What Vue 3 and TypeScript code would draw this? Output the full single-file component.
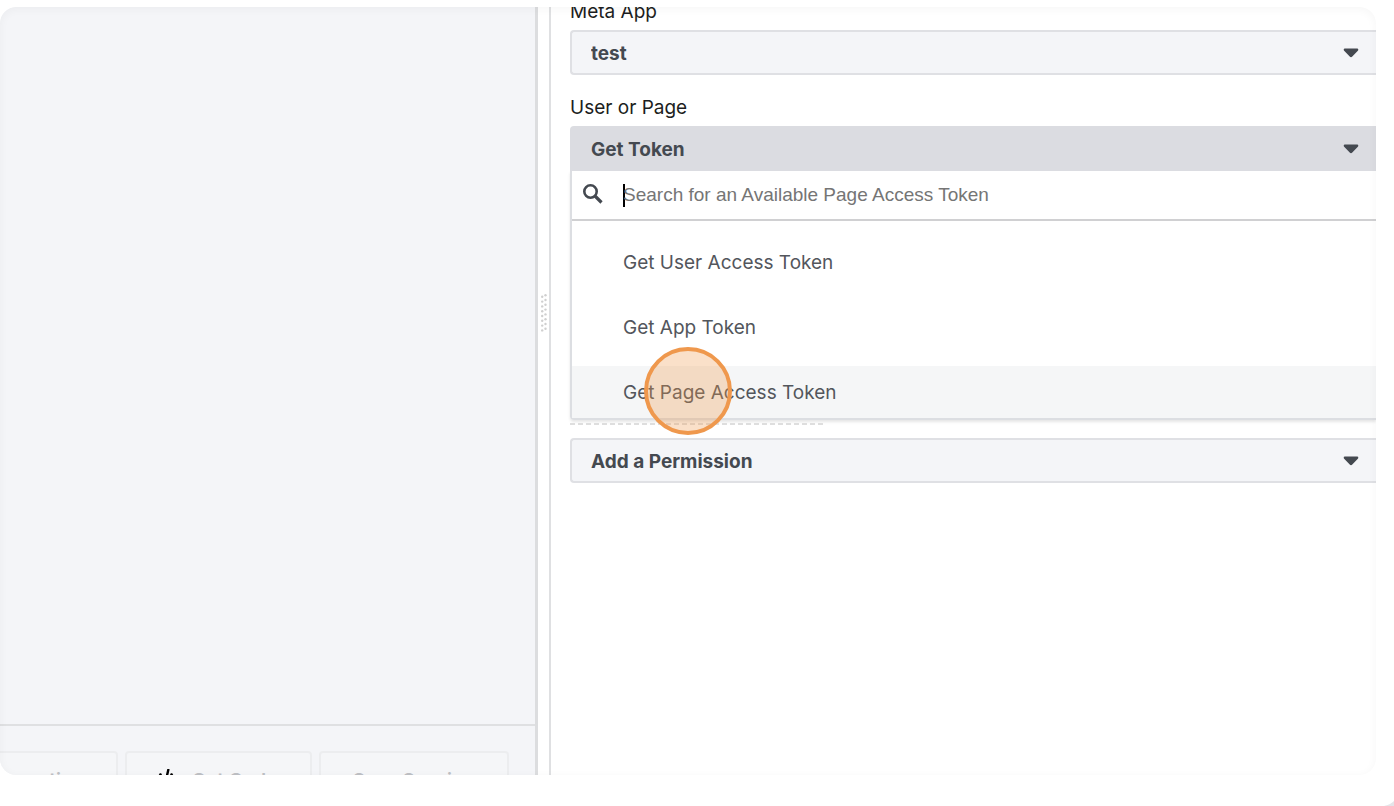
<script setup lang="ts">
import { ref } from 'vue'

const query = ref('')
const tokenOptions: string[] = ['Get User Access Token', 'Get App Token', 'Get Page Access Token']
const activeIndex = 2
const gripRows = 8
</script>

<template>
  <div class="page">
    <main class="frame">
      <section class="response">
        <div class="response-body"></div>
        <footer class="actions">
          <button type="button" class="action copy" disabled>Copy Debug Information</button>
          <button type="button" class="action code" disabled>
            <svg class="code-icon" viewBox="0 0 20 24" aria-hidden="true">
              <path d="M5 4.500 1 11.500 5 18.500M15 4.500l4 7-4 7M12.500 0 7 24" fill="none" stroke="#000" stroke-width="2.400" />
            </svg>
            Get Code
          </button>
          <button type="button" class="action save" disabled>Save Session</button>
        </footer>
      </section>

      <div class="splitter" role="separator" aria-orientation="vertical">
        <svg class="grip" viewBox="0 0 8 40" aria-hidden="true">
          <template v-for="n in gripRows" :key="n">
            <circle cx="5.500" :cy="n * 4.8 - 2.6" r="1.200" />
            <circle cx="2.200" :cy="n * 4.8 - 1" r="1.200" />
          </template>
        </svg>
      </div>

      <section class="settings">
        <label class="label" for="meta-app">Meta App</label>
        <div class="picker">
          <select id="meta-app"><option>test</option></select>
          <svg class="caret" viewBox="0 0 16 10" aria-hidden="true"><path d="M2 .5h12q1.500 0 1.300 1.300-.1.700-.7 1.300L9.300 8.500Q8 9.800 6.700 8.500L1.400 3.100Q.8 2.500.7 1.800.5.5 2 .5Z" /></svg>
        </div>

        <label class="label spaced" for="user-page">User or Page</label>
        <div class="picker open">
          <select id="user-page"><option>Get Token</option></select>
          <svg class="caret" viewBox="0 0 16 10" aria-hidden="true"><path d="M2 .5h12q1.500 0 1.300 1.300-.1.700-.7 1.300L9.300 8.500Q8 9.800 6.700 8.500L1.400 3.100Q.8 2.500.7 1.800.5.5 2 .5Z" /></svg>
        </div>
        <div class="menu">
          <div class="search">
            <svg class="search-icon" viewBox="0 0 20 20" aria-hidden="true">
              <circle cx="7.500" cy="7.500" r="6.200" fill="none" stroke="#444950" stroke-width="2.600" />
              <path d="m12 12 6.500 6.500" stroke="#444950" stroke-width="3.200" />
            </svg>
            <span class="text-cursor"></span>
            <input v-model="query" type="text" aria-label="Search tokens" placeholder="Search for an Available Page Access Token">
          </div>
          <ul class="options">
            <li v-for="(option, i) in tokenOptions" :key="option">
              <button type="button" class="option" :class="{ active: i === activeIndex }">{{ option }}</button>
              <span v-if="i === activeIndex" class="click-marker"></span>
            </li>
          </ul>
        </div>

        <div class="dashes"></div>
        <div class="picker">
          <select id="permission" aria-label="Add a Permission"><option>Add a Permission</option></select>
          <svg class="caret" viewBox="0 0 16 10" aria-hidden="true"><path d="M2 .5h12q1.500 0 1.300 1.300-.1.700-.7 1.300L9.300 8.500Q8 9.800 6.700 8.500L1.400 3.100Q.8 2.500.7 1.800.5.5 2 .5Z" /></svg>
        </div>
      </section>
    </main>
    <svg class="corner" viewBox="0 0 10 5" aria-hidden="true">
      <path d="M0 5Q6 4 10 0V5Z" fill="#e4e5e9" />
    </svg>
  </div>
</template>

<style>
body {
  margin: 0;
  background: #fff;
}
</style>

<style scoped>
* {
  box-sizing: border-box;
}

.page {
  position: relative;
  height: 100vh;
  padding: 7px 18px 31px 0;
  overflow: hidden;
  font-family: Inter, "Liberation Sans", sans-serif;
  font-size: 19px;
  line-height: 24px;
  color: #1c1e21;
}

.frame {
  position: relative;
  display: flex;
  height: 100%;
  overflow: hidden;
  border-radius: 16px;
  background: #fff;
}

.frame::after {
  content: "";
  position: absolute;
  inset: 0;
  border-radius: 16px;
  box-shadow: inset 0 2px 10px rgba(0, 0, 0, 0.04);
  pointer-events: none;
}

.response {
  display: flex;
  flex-direction: column;
  flex: 0 0 39.1%;
  min-width: 0;
  overflow: hidden;
  border-right: 3px solid #dcdddf;
  background: #f4f5f8;
}

.response-body {
  flex: 1;
}

.actions {
  display: flex;
  justify-content: flex-end;
  gap: 7px;
  height: 51px;
  padding: 25px 26px 0 0;
  border-top: 2px solid #dfe0e2;
}

.action {
  display: flex;
  flex: none;
  align-items: center;
  justify-content: center;
  gap: 16px;
  height: 60px;
  padding: 0 30px;
  border: 2px solid #ecedef;
  border-radius: 4px;
  background: #f5f6f8;
  color: #bec0c4;
  font: inherit;
  font-weight: 600;
}

.copy {
  width: 292px;
}

.code {
  width: 187px;
  padding: 0 32px 0 28px;
}

.save {
  width: 190px;
}

.code-icon {
  flex: none;
  width: 20px;
  height: 24px;
}

.splitter {
  display: flex;
  flex: 0 0 13px;
  justify-content: center;
  padding-top: 286px;
  border-right: 2px solid #dfe0e2;
}

.grip {
  width: 8px;
  height: 40px;
  fill: #cfcfcf;
}

.settings {
  flex: 1;
  min-width: 0;
  padding-left: 19px;
}

.label {
  display: block;
  height: 23px;
  line-height: 10px;
}

.label.spaced {
  height: 51px;
  padding-top: 20px;
  line-height: 26px;
}

.picker {
  position: relative;
  height: 45px;
}

.picker select {
  width: 100%;
  height: 100%;
  padding: 2px 40px 0 19px;
  appearance: none;
  border: 2px solid #dfe0e4;
  border-right: 0;
  border-radius: 4px 0 0 4px;
  background: #f4f5f8;
  color: #444950;
  font: inherit;
  font-weight: 700;
}

.picker.open select {
  border-color: #dbdce1;
  border-bottom-left-radius: 0;
  background: #dbdce1;
}

.caret {
  position: absolute;
  top: 18px;
  right: 17px;
  width: 16px;
  height: 10px;
  fill: #444950;
  pointer-events: none;
}

.menu {
  border: solid #dcdee2;
  border-width: 0 0 2px 2px;
  border-radius: 0 0 0 4px;
  box-shadow: 0 2px 3px rgba(0, 0, 0, 0.1);
}

.search {
  display: flex;
  align-items: center;
  height: 50px;
  padding-left: 11px;
  border-bottom: 2px solid #d0d0d2;
}

.search-icon {
  flex: none;
  width: 20px;
  height: 20px;
  margin: 0 20px 3px 0;
}

.text-cursor {
  flex: none;
  width: 2px;
  height: 23px;
  margin-right: -2px;
  background: #000;
}

.search input {
  flex: 1;
  min-width: 0;
  padding: 0;
  border: 0;
  outline: 0;
  background: none;
  font: 19px "Liberation Sans", sans-serif;
}

.search input::placeholder {
  color: #757575;
  opacity: 1;
}

.options {
  display: flex;
  flex-direction: column;
  gap: 13px;
  margin: 0;
  padding: 15px 0 0;
  list-style: none;
}

.options li {
  position: relative;
}

.option {
  display: block;
  width: 100%;
  height: 52px;
  padding: 2px 0 0 51px;
  border: 0;
  background: none;
  color: #53565c;
  font: inherit;
  text-align: left;
}

.option.active {
  background: #f5f6f7;
}

.click-marker {
  position: absolute;
  top: -19px;
  left: 72px;
  width: 88px;
  height: 88px;
  border: 4px solid #ef984d;
  border-radius: 50%;
  background: rgba(239, 152, 77, 0.3);
}

.dashes {
  width: 253px;
  height: 2px;
  margin: 3px 0 13px;
  background: repeating-linear-gradient(90deg, #dedede 0 5px, transparent 5px 8px);
}

.corner {
  position: absolute;
  right: 0;
  bottom: 0;
  width: 10px;
  height: 5px;
}
</style>
